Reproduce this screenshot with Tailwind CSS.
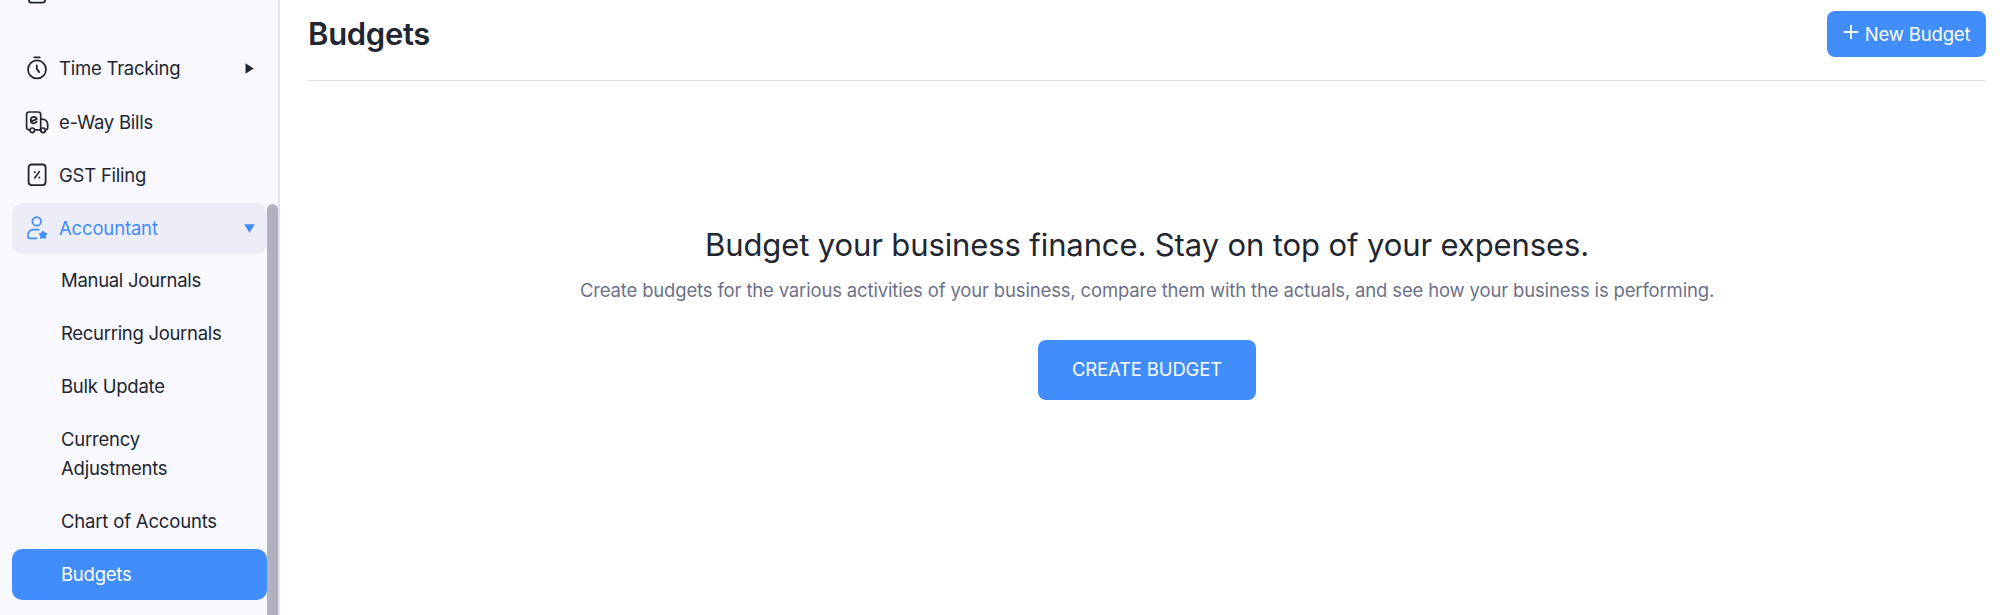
<!DOCTYPE html>
<html lang="en">
<head>
  <meta charset="UTF-8" />
  <meta name="viewport" content="width=device-width, initial-scale=1.0"/>
  <title>Budgets</title>
  <script src="https://cdn.jsdelivr.net/npm/@tailwindcss/browser@4"></script>
</head>
<body class="bg-white text-[#212631] font-['Inter',sans-serif] text-[18.5px] leading-[29.4px] tracking-[-0.16px] h-[615px] flex overflow-hidden">

  <!-- Sidebar -->
  <aside class="relative w-[280px] shrink-0 bg-[#f8f8fe] border-r-2 border-[#e3e3eb] overflow-hidden tracking-[-0.23px]">
    <!-- Item scrolled past the top -->
    <div class="h-[43px] pl-[27px]">
      <svg class="w-[20px] h-[4px]" viewBox="0 0 20 4" fill="none" stroke="#212631" stroke-width="1.8"><path d="M1.9 -4V0a2.6 2.6 0 0 0 2.6 2.6h11a2.6 2.6 0 0 0 2.6-2.6V-4"/></svg>
    </div>

    <nav class="pl-3 w-[267px] flex flex-col gap-[1.8px]">
      <a class="h-[52.3px] flex items-center pl-[13px] pr-[13px]">
        <svg class="w-6 h-6 mr-[10px] -mt-[3px]" viewBox="0 0 24 24" fill="none" stroke="#212631" stroke-width="1.8" stroke-linecap="round" stroke-linejoin="round"><circle cx="12" cy="13.4" r="9"/><path d="M9.2 1.3h5.6M11.8 9.3v3.6l2.4 3.2"/></svg>
        <span class="grow">Time Tracking</span>
        <svg class="w-[9px] h-[11px] -mt-px" viewBox="0 0 9 11" fill="#212631"><path d="M.5 .3L8.7 5.5L.5 10.7z"/></svg>
      </a>
      <a class="h-[51px] flex items-center pl-[13px]">
        <svg class="w-6 h-6 mr-[10px] overflow-visible" viewBox="0 0 24 24" fill="none" stroke="#212631" stroke-width="1.7" stroke-linecap="round" stroke-linejoin="round">
          <path d="M4.4 18.8H4a2.4 2.4 0 0 1-2.4-2.4V3.4A2.4 2.4 0 0 1 4 1h9.3a2.4 2.4 0 0 1 2.4 2.4v15.2M10 18.8h5.7M15.7 8.1h1.5a5.5 5.5 0 0 1 5.5 5.5v3a2.2 2.2 0 0 1-2 2.2"/>
          <circle cx="7.3" cy="19.3" r="2.3"/><circle cx="18" cy="19.3" r="2.3"/>
          <path stroke-width="1.8" d="M5.9 10.6l5.8-2.5c-.4-1.6-1.6-2.4-3-2.2-1.9.3-3.1 2-2.9 3.9.2 1.7 1.5 2.7 3 2.5 1.2-.1 2.1-.6 2.8-1.5"/>
        </svg>
        <span class="pt-px">e-Way Bills</span>
      </a>
      <a class="h-[51px] flex items-center pl-[13px]">
        <svg class="w-6 h-6 mr-[10px]" viewBox="0 0 24 24" fill="none" stroke="#212631" stroke-width="1.8" stroke-linecap="round">
          <rect x="3.6" y="1.5" width="17" height="20.6" rx="3"/><path stroke-width="1.6" d="M14.3 8.6l-4.6 6.4"/>
          <circle cx="9.8" cy="9.3" r="1" fill="#212631" stroke="none"/><circle cx="14.3" cy="14.4" r="1" fill="#212631" stroke="none"/>
        </svg>
        <span>GST Filing</span>
      </a>
      <a class="h-[51px] flex items-center pl-[13px] pr-3 rounded-[10px] bg-[#ededf7] text-[#408dfb] tracking-[-0.16px]">
        <svg class="w-6 h-6 mr-[10px]" viewBox="0 0 24 24" fill="none" stroke="#408dfb" stroke-width="1.7" stroke-linecap="round" stroke-linejoin="round">
          <circle cx="11.7" cy="5.4" r="4.3"/><path d="M13.8 13.7H8.2A5.2 5.2 0 0 0 3 18.9v1.4a2 2 0 0 0 2 2h6.4"/>
          <path fill="#408dfb" stroke-width="1.9" d="M18 15.7l1 1.8 2.2.4-1.5 1.6.3 2.3-2-.9-2 .9.3-2.3-1.5-1.6 2.2-.4z"/>
        </svg>
        <span class="grow pt-px">Accountant</span>
        <svg class="w-[11px] h-[9px]" viewBox="0 0 11 9" fill="#408dfb"><path d="M.2 .3h10.6L5.5 8.8z"/></svg>
      </a>

      <!-- Accountant submenu -->
      <a class="pl-[49px] py-[10.8px] tracking-[-0.3px]">Manual Journals</a>
      <a class="pl-[49px] py-[10.8px] tracking-[-0.3px]">Recurring Journals</a>
      <a class="pl-[49px] pt-[11.3px] pb-[10.3px]">Bulk Update</a>
      <a class="pl-[49px] py-[10.8px]">Currency<br>Adjustments</a>
      <a class="pl-[49px] py-[10.8px] tracking-[-0.18px]">Chart of Accounts</a>
      <a class="pl-[49px] py-[10.8px] rounded-[10px] bg-[#408dfb] text-white">Budgets</a>
    </nav>

    <!-- Scrollbar thumb -->
    <div class="absolute right-0 top-[204px] w-[11px] h-[430px] rounded-full bg-[#b1b1bf]"></div>
  </aside>

  <!-- Main -->
  <main class="grow pl-[28px] pr-[14px]">
    <header class="h-[81px] border-b-[1.5px] border-[#e0e0ea] flex justify-between items-start pt-[11px]">
      <h1 class="text-[31px] leading-[46px] font-semibold tracking-[-0.3px]">Budgets</h1>
      <button class="h-[46px] w-[159px] rounded-[8px] bg-[#408dfb] text-white flex items-center justify-center">
        <svg class="w-4 h-4 mr-[6px] -mt-1" viewBox="0 0 16 16" fill="none" stroke="white" stroke-width="1.8"><path d="M8 .8v14.4M.8 8h14.4"/></svg>
        <span class="pt-px">New Budget</span>
      </button>
    </header>

    <section class="flex flex-col items-center pt-[141px]">
      <h2 class="text-[31px] leading-[46px] tracking-[-0.11px]">Budget your business finance. Stay on top of your expenses.</h2>
      <p class="mt-2 text-[#6c718a]">Create budgets for the various activities of your business, compare them with the actuals, and see how your business is performing.</p>
      <button class="mt-[34.6px] w-[218px] h-[60px] rounded-[8px] bg-[#408dfb] text-white">CREATE BUDGET</button>
    </section>
  </main>

</body>
</html>
